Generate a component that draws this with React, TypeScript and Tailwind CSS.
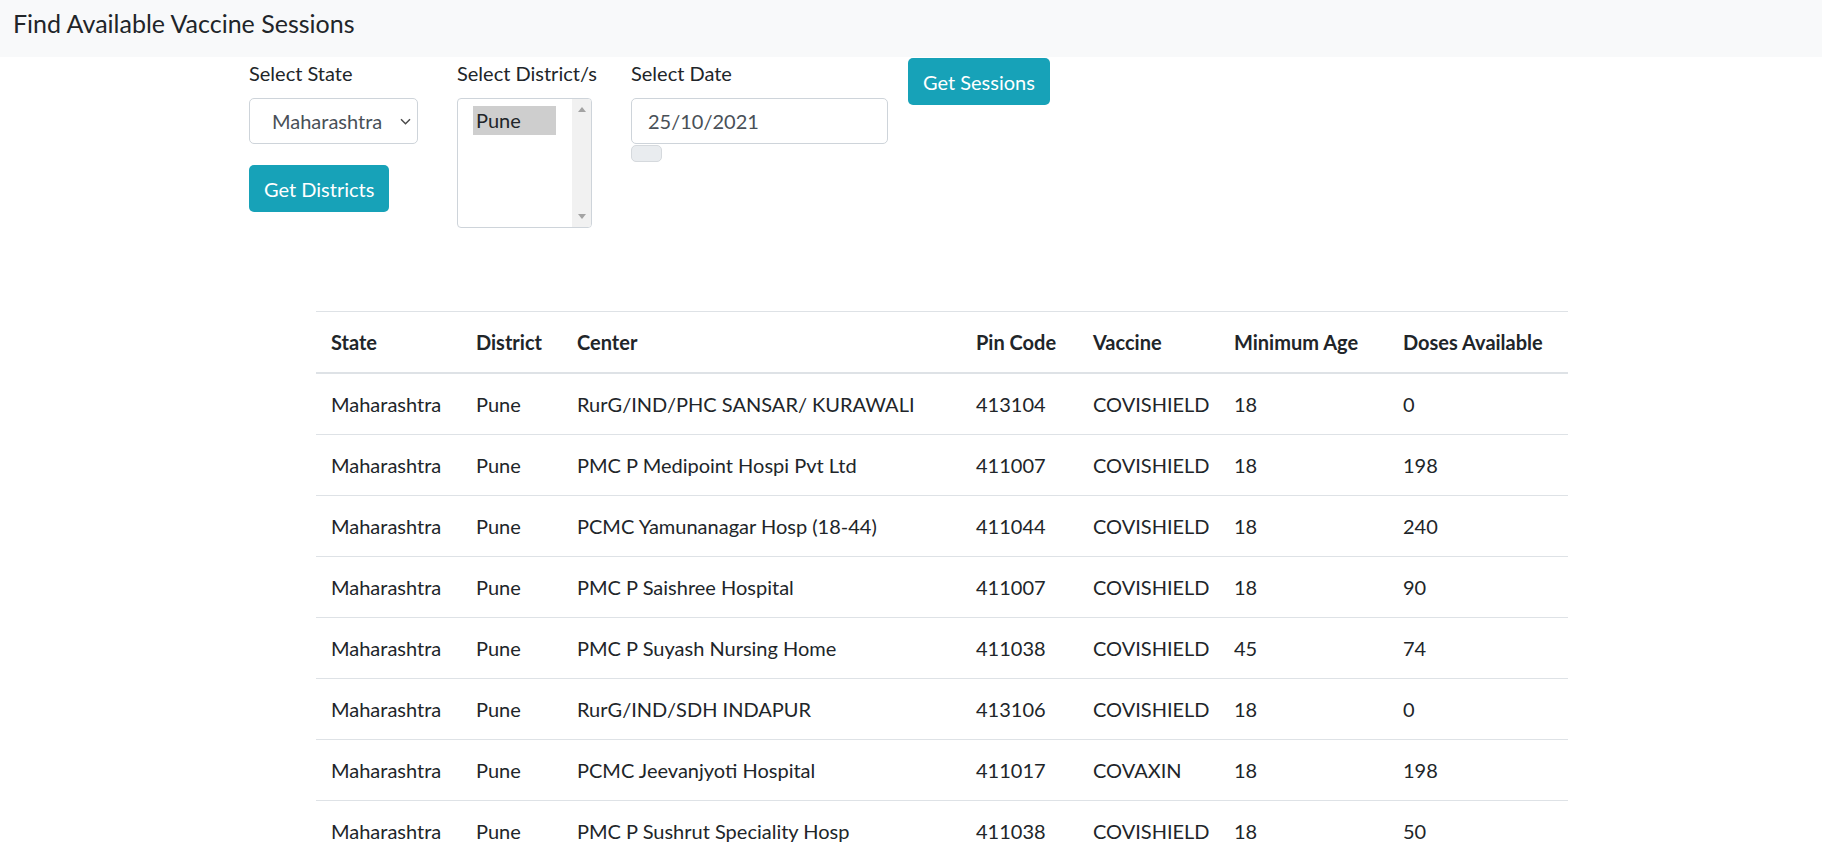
import React from "react"

const sessions = [
  { center: "RurG/IND/PHC SANSAR/ KURAWALI", pin: "413104", vaccine: "COVISHIELD", age: 18, doses: 0 },
  { center: "PMC P Medipoint Hospi Pvt Ltd", pin: "411007", vaccine: "COVISHIELD", age: 18, doses: 198 },
  { center: "PCMC Yamunanagar Hosp (18-44)", pin: "411044", vaccine: "COVISHIELD", age: 18, doses: 240 },
  { center: "PMC P Saishree Hospital", pin: "411007", vaccine: "COVISHIELD", age: 18, doses: 90 },
  { center: "PMC P Suyash Nursing Home", pin: "411038", vaccine: "COVISHIELD", age: 45, doses: 74 },
  { center: "RurG/IND/SDH INDAPUR", pin: "413106", vaccine: "COVISHIELD", age: 18, doses: 0 },
  { center: "PCMC Jeevanjyoti Hospital", pin: "411017", vaccine: "COVAXIN", age: 18, doses: 198 },
  { center: "PMC P Sushrut Speciality Hosp", pin: "411038", vaccine: "COVISHIELD", age: 18, doses: 50 },
]

const columns = [
  { label: "State", width: "w-[145px]" },
  { label: "District", width: "w-[101px]" },
  { label: "Center", width: "w-[399px]" },
  { label: "Pin Code", width: "w-[117px]" },
  { label: "Vaccine", width: "w-[141px]" },
  { label: "Minimum Age", width: "w-[169px]" },
  { label: "Doses Available", width: "w-[180px]" },
]

function Label({ children }: { children: React.ReactNode }) {
  return (
    <div className="mb-[10px] h-[30px] whitespace-nowrap text-[20px] leading-[30px] text-[#212529]">{children}</div>
  )
}

function TealButton({ children }: { children: React.ReactNode }) {
  return (
    <button className="h-[47px] whitespace-nowrap rounded-[5px] bg-[#17a2b8] px-[15px] text-[20px] leading-[30px] text-white">
      {children}
    </button>
  )
}

export default function App() {
  return (
    <div className="min-h-[865px] bg-white font-['Lato',sans-serif] text-[#212529]">
      {/* Header */}
      <div className="h-[57px] bg-[#f8f9fa] pl-[13px] pt-[5px]">
        <span className="text-[25px] leading-[37px] text-[#212529]">Find Available Vaccine Sessions</span>
      </div>

      {/* Form */}
      <div className="ml-[249px] flex items-start pt-[1px]">
        <div className="flex w-[169px] flex-col items-start">
          <Label>Select State</Label>
          <div className="flex h-[46px] w-[169px] items-center justify-between rounded-[5px] border border-[#ced4da] bg-white pl-[22px] pr-[6px] text-[20px] text-[#495057]">
            <span>Maharashtra</span>
            <svg width="11" height="7" viewBox="0 0 11 7">
              <path d="M1 1.2l4.5 4.5 4.5-4.5" fill="none" stroke="#4a4a4a" strokeWidth="1.5" />
            </svg>
          </div>
          <div className="mt-[21px]">
            <TealButton>Get Districts</TealButton>
          </div>
        </div>

        <div className="ml-[39px] flex w-[135px] flex-col">
          <Label>Select District/s</Label>
          <div className="flex h-[130px] w-[135px] overflow-hidden rounded-[4px] border border-[#ced4da] bg-white">
            <div className="flex-1 pl-[15px] pt-[7px]">
              <div className="h-[29px] w-[83px] bg-[#cecece] pl-[3px] text-[20px] leading-[29px] text-[#212529]">Pune</div>
            </div>
            <div className="flex w-[19px] flex-col items-center justify-between bg-[#f1f1f1] py-[8px]">
              <svg width="8" height="5" viewBox="0 0 8 5">
                <path d="M0 5L4 0l4 5z" fill="#a3a3a3" />
              </svg>
              <svg width="8" height="5" viewBox="0 0 8 5">
                <path d="M0 0l4 5 4-5z" fill="#a3a3a3" />
              </svg>
            </div>
          </div>
        </div>

        <div className="ml-[39px] flex w-[257px] flex-col">
          <Label>Select Date</Label>
          <div className="flex h-[46px] w-[257px] items-center rounded-[5px] border border-[#ced4da] bg-white pl-[16px] text-[20px] text-[#495057]">
            25/10/2021
          </div>
          <div className="mt-[1px] h-[17px] w-[31px] rounded-[5px] border border-[#d5d9dd] bg-[#e9ecef]" />
        </div>

        <div className="ml-[20px]">
          <TealButton>Get Sessions</TealButton>
        </div>
      </div>

      {/* Sessions table */}
      <div className="ml-[316px] mt-[83px]">
        <table className="w-[1252px] table-fixed border-collapse text-[20px] leading-[30px]">
          <thead>
            <tr>
              {columns.map((col) => (
                <th
                  key={col.label}
                  className={`${col.width} border-t border-b-2 border-[#dee2e6] px-[15px] py-[15px] text-left font-bold`}
                >
                  {col.label}
                </th>
              ))}
            </tr>
          </thead>
          <tbody>
            {sessions.map((s, i) => (
              <tr key={i}>
                <td className="border-t border-[#dee2e6] px-[15px] py-[15px]">Maharashtra</td>
                <td className="border-t border-[#dee2e6] px-[15px] py-[15px]">Pune</td>
                <td className="border-t border-[#dee2e6] px-[15px] py-[15px]">{s.center}</td>
                <td className="border-t border-[#dee2e6] px-[15px] py-[15px]">{s.pin}</td>
                <td className="border-t border-[#dee2e6] px-[15px] py-[15px]">{s.vaccine}</td>
                <td className="border-t border-[#dee2e6] px-[15px] py-[15px]">{s.age}</td>
                <td className="border-t border-[#dee2e6] px-[15px] py-[15px]">{s.doses}</td>
              </tr>
            ))}
          </tbody>
        </table>
      </div>
    </div>
  )
}
